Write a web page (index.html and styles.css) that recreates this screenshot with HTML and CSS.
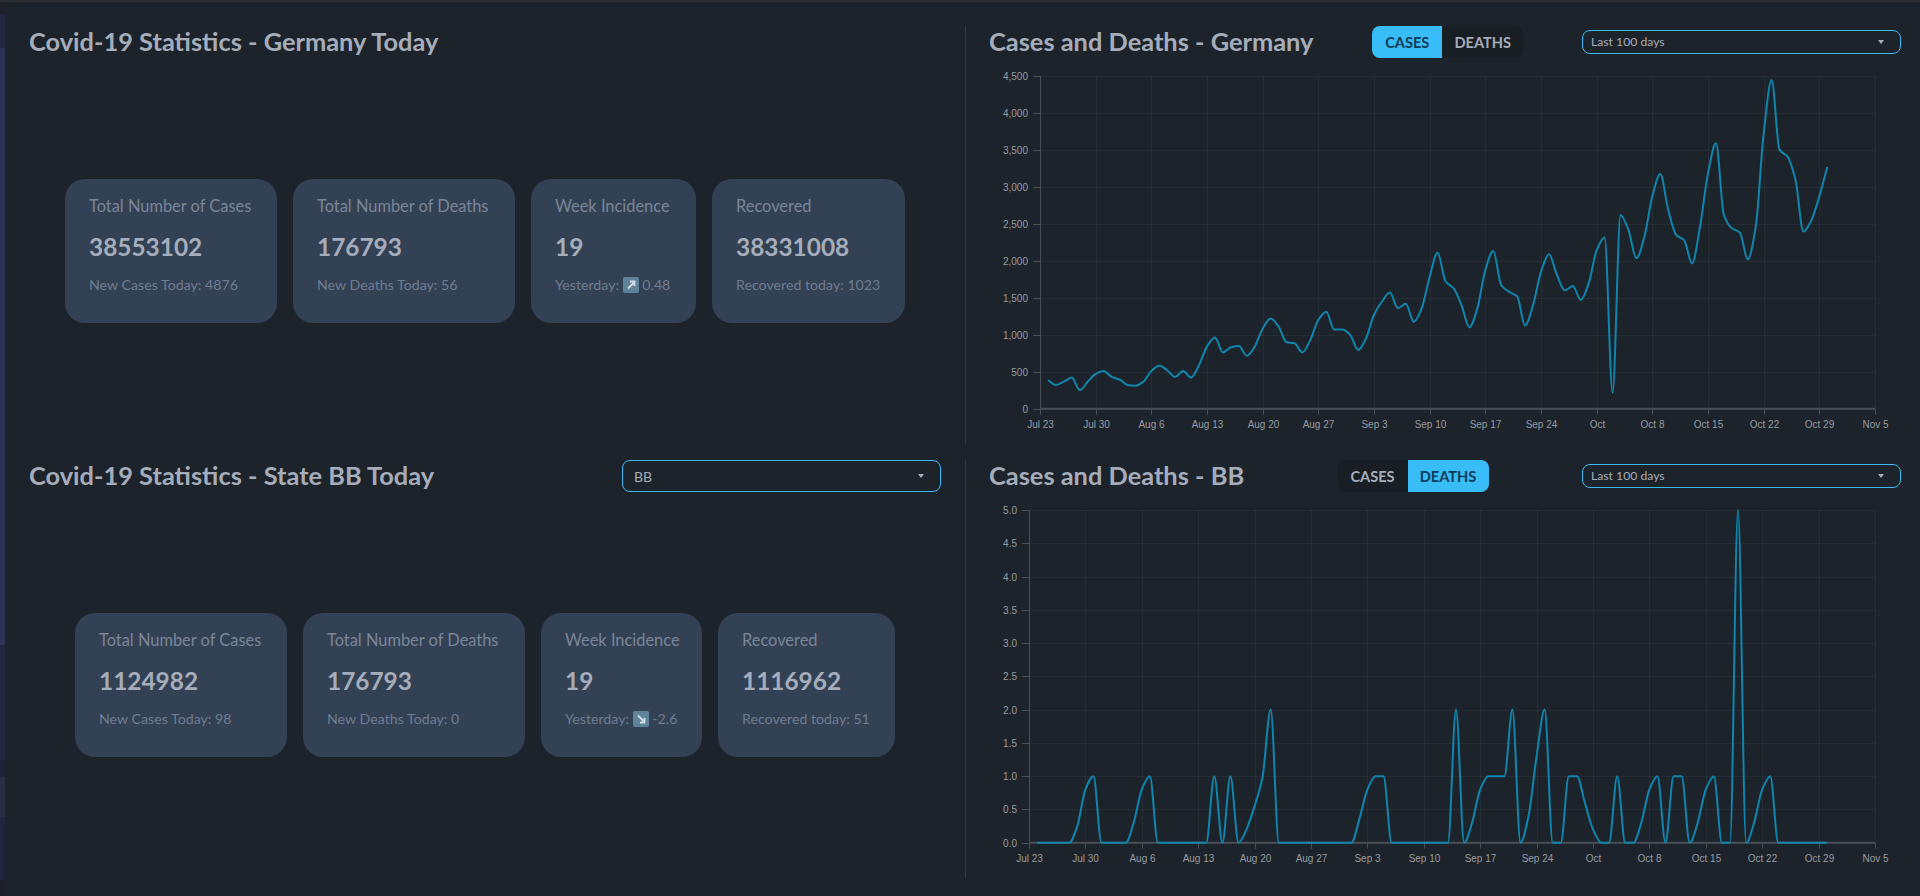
FILE: index.html
```html
<!DOCTYPE html>
<html>
	<head>
		<meta charset="UTF-8">
		<title>Covid-19 Statistics</title>
		<link rel="stylesheet" href="styles.css">
		<script type="text/javascript" src="charts.js"></script>
	</head>
	<body>
		<div class="strip"></div>
		<div class="board">
			<!--Germany today-->
			<section class="panel">
				<div class="head">
					<h2>Covid-19 Statistics - Germany Today</h2>
				</div>
				<div class="stats">
					<div class="stat cols-a1">
						<div class="stat-title">Total Number of Cases</div>
						<div class="stat-value">38553102</div>
						<div class="stat-desc">New Cases Today: 4876</div>
					</div>
					<div class="stat cols-a2">
						<div class="stat-title">Total Number of Deaths</div>
						<div class="stat-value">176793</div>
						<div class="stat-desc">New Deaths Today: 56</div>
					</div>
					<div class="stat cols-a3">
						<div class="stat-title">Week Incidence</div>
						<div class="stat-value">19</div>
						<div class="stat-desc">Yesterday:
							<svg class="trend" viewBox="0 0 16 16"><rect width="16" height="16" rx="2" fill="#5f8499"/><path d="M5 11.5 10.5 6M7 4.5h4.5V9" fill="none" stroke="#d5dde2" stroke-width="1.8"/></svg>
							0.48</div>
					</div>
					<div class="stat cols-a4">
						<div class="stat-title">Recovered</div>
						<div class="stat-value">38331008</div>
						<div class="stat-desc">Recovered today: 1023</div>
					</div>
				</div>
			</section>
			<!--chart Germany-->
			<section class="panel panel-chart">
				<div class="head">
					<h2>Cases and Deaths - Germany</h2>
					<div class="btn-group">
						<a class="btn active">Cases</a>
						<a class="btn">Deaths</a>
					</div>
					<div class="select select-xs"><span>Last 100 days</span><i class="caret"></i></div>
				</div>
				<svg class="chart" id="chartCases" viewBox="0 0 912 380"></svg>
			</section>
			<!--state today-->
			<section class="panel">
				<div class="head">
					<h2>Covid-19 Statistics - State BB Today</h2>
					<div class="select"><span>BB</span><i class="caret"></i></div>
				</div>
				<div class="stats">
					<div class="stat cols-b1">
						<div class="stat-title">Total Number of Cases</div>
						<div class="stat-value">1124982</div>
						<div class="stat-desc">New Cases Today: 98</div>
					</div>
					<div class="stat cols-b2">
						<div class="stat-title">Total Number of Deaths</div>
						<div class="stat-value">176793</div>
						<div class="stat-desc">New Deaths Today: 0</div>
					</div>
					<div class="stat cols-b3">
						<div class="stat-title">Week Incidence</div>
						<div class="stat-value">19</div>
						<div class="stat-desc">Yesterday:
							<svg class="trend" viewBox="0 0 16 16"><rect width="16" height="16" rx="2" fill="#5f8499"/><path d="M5 4.5 10.5 10M11.5 7v4.5H7" fill="none" stroke="#d5dde2" stroke-width="1.8"/></svg>
							-2.6</div>
					</div>
					<div class="stat cols-b4">
						<div class="stat-title">Recovered</div>
						<div class="stat-value">1116962</div>
						<div class="stat-desc">Recovered today: 51</div>
					</div>
				</div>
			</section>
			<!--chart state-->
			<section class="panel panel-chart">
				<div class="head">
					<h2>Cases and Deaths - BB</h2>
					<div class="btn-group">
						<a class="btn">Cases</a>
						<a class="btn active">Deaths</a>
					</div>
					<div class="select select-xs"><span>Last 100 days</span><i class="caret"></i></div>
				</div>
				<svg class="chart" id="chartDeaths" viewBox="0 0 912 380"></svg>
			</section>
		</div>
	</body>
</html>
```
FILE: styles.css
```css
*{
	margin: 0;
	padding: 0;
	box-sizing: border-box;
}
html,body{
	height: 100%;
	overflow: hidden;
}
body{
	display: flex;
	background-color: #1d232a;
	border-top: 2px solid #2a2d31;
	font-family: "Lato", "Noto Sans", sans-serif;
	color: #a6adba;
}
/*edge of the window behind the page*/
.strip{
	width: 5px;
	flex: none;
	background: linear-gradient(#1e2228 12px,
		#232640 12px, #232640 46px,
		#2d3354 46px, #2d3354 643px,
		#232640 643px, #232640 758px,
		#1f2236 758px, #1f2236 775px,
		#2b2e42 775px, #2b2e42 815px,
		#22253d 815px, #22253d 878px,
		#1e2228 878px);
}
.board{
	flex: 1;
	display: grid;
	grid-template-columns: 960px 955px;
	grid-template-rows: 418px 418px;
	row-gap: 16px;
	padding-top: 24px;
}
.panel{
	display: flex;
	flex-direction: column;
	padding: 0 24px;
	min-width: 0;
}
.panel-chart{
	border-left: 1px solid #2f3741;
	padding: 0 19px 0 23px;
}
.head{
	height: 32px;
	display: flex;
	justify-content: space-between;
	align-items: center;
	flex: none;
}
h2{
	margin-bottom: 2px;
	font-size: 25.4px;
	font-weight: 700;
	line-height: 32px;
	white-space: nowrap;
	color: #a6adba;
}
/*stat cards*/
.stats{
	flex: 1;
	display: flex;
	justify-content: center;
	align-items: center;
	gap: 16px;
}
.stat{
	height: 144px;
	padding: 15px 24px;
	background-color: #334155;
	border-radius: 20px;
	white-space: nowrap;
	flex: none;
}
.cols-a1{ width: 212px; }
.cols-a2{ width: 222px; }
.cols-a3{ width: 165px; }
.cols-a4{ width: 193px; }
.cols-b1{ width: 212px; }
.cols-b2{ width: 222px; }
.cols-b3{ width: 161px; }
.cols-b4{ width: 177px; }
.stat-title{
	font-size: 16.4px;
	line-height: 24px;
	color: #7a8697;
}
.stat-value{
	margin-top: 9px;
	font-size: 24.4px;
	font-weight: 700;
	line-height: 40px;
	color: #a6adba;
}
.stat-desc{
	margin-top: 8px;
	font-size: 14.2px;
	line-height: 20px;
	color: #6f7c8f;
}
.trend{
	width: 16px;
	height: 16px;
	vertical-align: -3px;
}
/*toggle*/
.btn-group{
	display: flex;
	flex: none;
}
.btn{
	height: 32px;
	display: flex;
	justify-content: center;
	align-items: center;
	background-color: #191d24;
	font-size: 14.6px;
	font-weight: 700;
	text-transform: uppercase;
	color: #a6adba;
}
.btn:first-child{
	width: 70px;
	border-radius: 8px 0 0 8px;
}
.btn:last-child{
	width: 81px;
	border-radius: 0 8px 8px 0;
}
.btn.active{
	background-color: #38bdf8;
	color: #0b3b57;
}
/*select*/
.select{
	width: 319px;
	height: 32px;
	padding: 0 16px 0 11px;
	display: flex;
	justify-content: space-between;
	align-items: center;
	flex: none;
	border: 1px solid #38bdf8;
	border-radius: 8px;
	font-size: 14px;
	color: #a6adba;
}
.select-xs{
	height: 24px;
	padding: 0 16px 0 8px;
	font-size: 12.2px;
}
.select-xs span{
	margin-bottom: 2px;
}
.caret{
	width: 0;
	height: 0;
	border-left: 3.5px solid transparent;
	border-right: 3.5px solid transparent;
	border-top: 4px solid #a6adba;
}
/*charts*/
.chart{
	display: block;
	width: 912px;
	height: 380px;
	margin-top: 6px;
	flex: none;
}
.grid{
	stroke: rgba(255,255,255,0.045);
	stroke-width: 1;
}
.axis{
	stroke: #4a4e55;
	stroke-width: 1;
}
.axis-x{
	stroke: #4a4e55;
	stroke-width: 2;
}
.tick{
	font-family: "Liberation Sans", Arial, sans-serif;
	font-size: 10px;
	fill: #979ba1;
}
.line{
	fill: none;
	stroke: #0e86ae;
	stroke-width: 2;
}
```
FILE: charts.js
```js
window.onload = function(){
	var casesData = [388,320,365,420,250,365,470,510,430,395,320,310,365,510,580,520,430,510,420,590,
		840,965,760,830,850,715,840,1085,1220,1110,900,885,760,930,1200,1310,1070,1070,1000,795,
		950,1270,1450,1570,1360,1420,1175,1360,1785,2110,1720,1630,1400,1100,1360,1875,2135,1670,1580,1520,
		1125,1400,1850,2090,1810,1600,1660,1470,1695,2145,2315,215,2620,2415,2035,2325,2870,3175,2690,2350,
		2280,1965,2460,3185,3590,2620,2440,2385,2020,2460,3725,4445,3500,3410,3095,2395,2550,2870,3270];

	var deathsData = [0,0,0,0,0,0.25,0.8,1,0,0,0,0,0.3,0.8,1,0,0,0,0,0,
		0,0,1,0,1,0,0.2,0.55,1,2,0,0,0,0,0,0,0,0,0,0,
		0.35,0.8,1,1,0,0,0,0,0,0,0,0,2,0,0.3,0.8,1,1,1,2,
		0,0.4,1.3,2,0,0,1,1,0.6,0.2,0,0,1,0,0,0.3,0.8,1,0,1,
		1,0,0.3,0.8,1,0,0,5,0,0.3,0.8,1,0,0,0,0,0,0,0];

	var weeks = ["Jul 23","Jul 30","Aug 6","Aug 13","Aug 20","Aug 27","Sep 3","Sep 10","Sep 17","Sep 24","Oct","Oct 8","Oct 15","Oct 22","Oct 29","Nov 5"];

	drawChart("chartCases", casesData, weeks, {
		left: 51,
		max: 4500,
		step: 500,
		label: function(v){
			return v >= 1000 ? Math.floor(v/1000) + "," + String(v%1000 + 1000).slice(1) : String(v);
		}
	});
	drawChart("chartDeaths", deathsData, weeks, {
		left: 40,
		max: 5,
		step: 0.5,
		label: function(v){
			return v.toFixed(1);
		}
	});
};

function drawChart(id, data, weeks, opt){
	var right = 886, top = 12, bottom = 344.7;
	var dayW = (right - opt.left) / 105;
	var html = "";
	var i, x, y;

	//vertical grid, ticks and date labels
	for (i = 0; i < weeks.length; i++){
		x = Math.round(opt.left + i*7*dayW) + 0.5;
		html += '<line class="grid" x1="'+x+'" y1="'+top+'" x2="'+x+'" y2="'+bottom+'"/>';
		html += '<line class="axis" x1="'+x+'" y1="'+bottom+'" x2="'+x+'" y2="'+(bottom+6)+'"/>';
		html += '<text class="tick" text-anchor="middle" x="'+x+'" y="'+(bottom+19)+'">'+weeks[i]+'</text>';
	}
	//horizontal grid, ticks and value labels
	var n = Math.round(opt.max / opt.step);
	for (i = 0; i <= n; i++){
		y = Math.round(bottom - (bottom-top)*i/n) + 0.5;
		html += '<line class="grid" x1="'+opt.left+'" y1="'+y+'" x2="'+right+'" y2="'+y+'"/>';
		html += '<line class="axis" x1="'+(opt.left-7)+'" y1="'+y+'" x2="'+opt.left+'" y2="'+y+'"/>';
		html += '<text class="tick" text-anchor="end" x="'+(opt.left-12)+'" y="'+(y+3.5)+'">'+opt.label(i*opt.step)+'</text>';
	}
	html += '<line class="axis" x1="'+(opt.left+0.5)+'" y1="'+top+'" x2="'+(opt.left+0.5)+'" y2="'+bottom+'"/>';
	html += '<line class="axis-x" x1="'+opt.left+'" y1="'+bottom+'" x2="'+right+'" y2="'+bottom+'"/>';

	var pts = [];
	for (i = 0; i < data.length; i++){
		pts.push([opt.left + (i+1)*dayW, bottom - (bottom-top)*data[i]/opt.max]);
	}
	html += '<path class="line" d="'+monotonePath(pts)+'"/>';
	document.getElementById(id).innerHTML = html;
}

//monotone cubic curve, no overshoot past the data points
function monotonePath(pts){
	var m = [], s = [], i;
	for (i = 0; i < pts.length-1; i++){
		s.push((pts[i+1][1]-pts[i][1]) / (pts[i+1][0]-pts[i][0]));
	}
	m.push(s[0]);
	for (i = 1; i < pts.length-1; i++){
		m.push(s[i-1]*s[i] <= 0 ? 0 : 2*s[i-1]*s[i]/(s[i-1]+s[i]));
	}
	m.push(s[s.length-1]);
	var d = "M"+pts[0][0].toFixed(1)+" "+pts[0][1].toFixed(1);
	for (i = 0; i < pts.length-1; i++){
		var h = (pts[i+1][0]-pts[i][0])/3;
		d += "C"+(pts[i][0]+h).toFixed(1)+" "+(pts[i][1]+m[i]*h).toFixed(1)
			+" "+(pts[i+1][0]-h).toFixed(1)+" "+(pts[i+1][1]-m[i+1]*h).toFixed(1)
			+" "+pts[i+1][0].toFixed(1)+" "+pts[i+1][1].toFixed(1);
	}
	return d;
}
```
